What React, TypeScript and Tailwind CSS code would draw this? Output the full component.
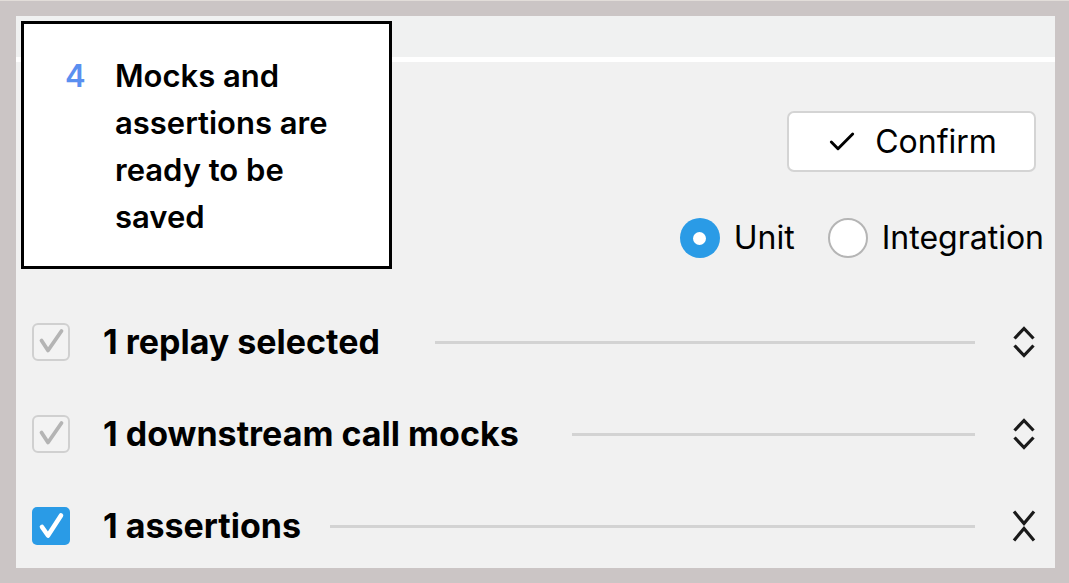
import { Check } from 'lucide-react';

const rows = [
  { label: '1 replay selected', gap: 'ml-[55px]', active: false, open: false },
  { label: '1 downstream call mocks', gap: 'ml-[53px]', active: false, open: false },
  { label: '1 assertions', gap: 'ml-[29px]', active: true, open: true },
];

function RowCheckbox({ active }: { active: boolean }) {
  if (active) {
    return (
      <svg viewBox="0 0 38 38" className="h-[38px] w-[38px]">
        <rect x="0" y="0" width="38" height="38" rx="5" fill="#2a9be6" />
        <path d="M10 20l6 8.5L29 8.5" fill="none" stroke="white" strokeWidth={4.6} strokeLinecap="round" strokeLinejoin="round" />
      </svg>
    );
  }
  return (
    <svg viewBox="0 0 38 38" className="h-[38px] w-[38px]">
      <rect x="1" y="1" width="36" height="36" rx="5" fill="#f3f3f3" stroke="#d0d0d0" strokeWidth={2} />
      <path d="M9.5 17.5l6.5 10L29.5 8" fill="none" stroke="#b4b4b4" strokeWidth={3.8} strokeLinecap="round" strokeLinejoin="round" />
    </svg>
  );
}

function Toggle({ open }: { open: boolean }) {
  return (
    <svg viewBox="0 0 24 32" className="h-[32px] w-[24px]" fill="none" stroke="#1a1a1a" strokeWidth={3.2} strokeLinejoin="miter">
      {open ? (
        <>
          <path d="M2 1.5l10 12 10-12" />
          <path d="M2 30.5l10-12 10 12" />
        </>
      ) : (
        <>
          <path d="M2.5 12.5L12 2.5l9.5 10" />
          <path d="M2.5 19.5L12 29.5l9.5-10" />
        </>
      )}
    </svg>
  );
}

export default function App() {
  return (
    <div className="h-[583px] w-[1069px] border-t border-[#e2ddd9] bg-[#cbc5c5] pb-[15px] pl-[16px] pr-[14px] pt-[15px] font-['Inter',sans-serif] text-black">
      <div className="relative flex h-full flex-col bg-[#f1f1f1]">
        <div className="h-[41px] bg-[#f0f1f1]" />
        <div className="h-[5px] bg-white" />

        <div className="flex flex-col items-end pr-[19px] pt-[49px]">
          <button className="flex h-[61px] w-[249px] items-center justify-center gap-[17px] rounded-[7px] border-2 border-[#d4d4d4] bg-white text-[32px] leading-none">
            <Check className="h-[32px] w-[32px]" strokeWidth={2.2} />
            <span>Confirm</span>
          </button>
        </div>

        <div className="mt-[46px] flex items-center justify-end gap-[14px] pr-[11px] text-[32px] leading-none">
          <div className="flex h-[40px] w-[40px] items-center justify-center rounded-full bg-[#2a9be6]">
            <div className="h-[13px] w-[13px] rounded-full bg-white" />
          </div>
          <span>Unit</span>
          <div className="ml-[19px] h-[40px] w-[40px] rounded-full border-2 border-[#b5b5b5] bg-white" />
          <span>Integration</span>
        </div>

        <div className="mt-[65px] flex flex-col gap-[54px] pl-[16px] pr-[19px]">
          {rows.map((r) => (
            <div key={r.label} className="flex h-[38px] items-center">
              <RowCheckbox active={r.active} />
              <span className="ml-[33px] text-[34px] font-bold leading-none">{r.label}</span>
              <div className={`${r.gap} h-[3px] flex-1 bg-[#d3d3d3]`} />
              <div className="ml-[37px]">
                <Toggle open={r.open} />
              </div>
            </div>
          ))}
        </div>

        <div className="absolute left-[5px] top-[5px] h-[248px] w-[371px] border-[3px] border-black bg-white">
          <div className="flex pl-[41px] pt-[28px]">
            <span className="w-[50px] text-[31px] font-semibold leading-[47px] text-[#5a8ff0]">4</span>
            <p className="w-[250px] text-[31px] font-semibold leading-[47px]">
              Mocks and assertions are ready to be saved
            </p>
          </div>
        </div>
      </div>
    </div>
  );
}
